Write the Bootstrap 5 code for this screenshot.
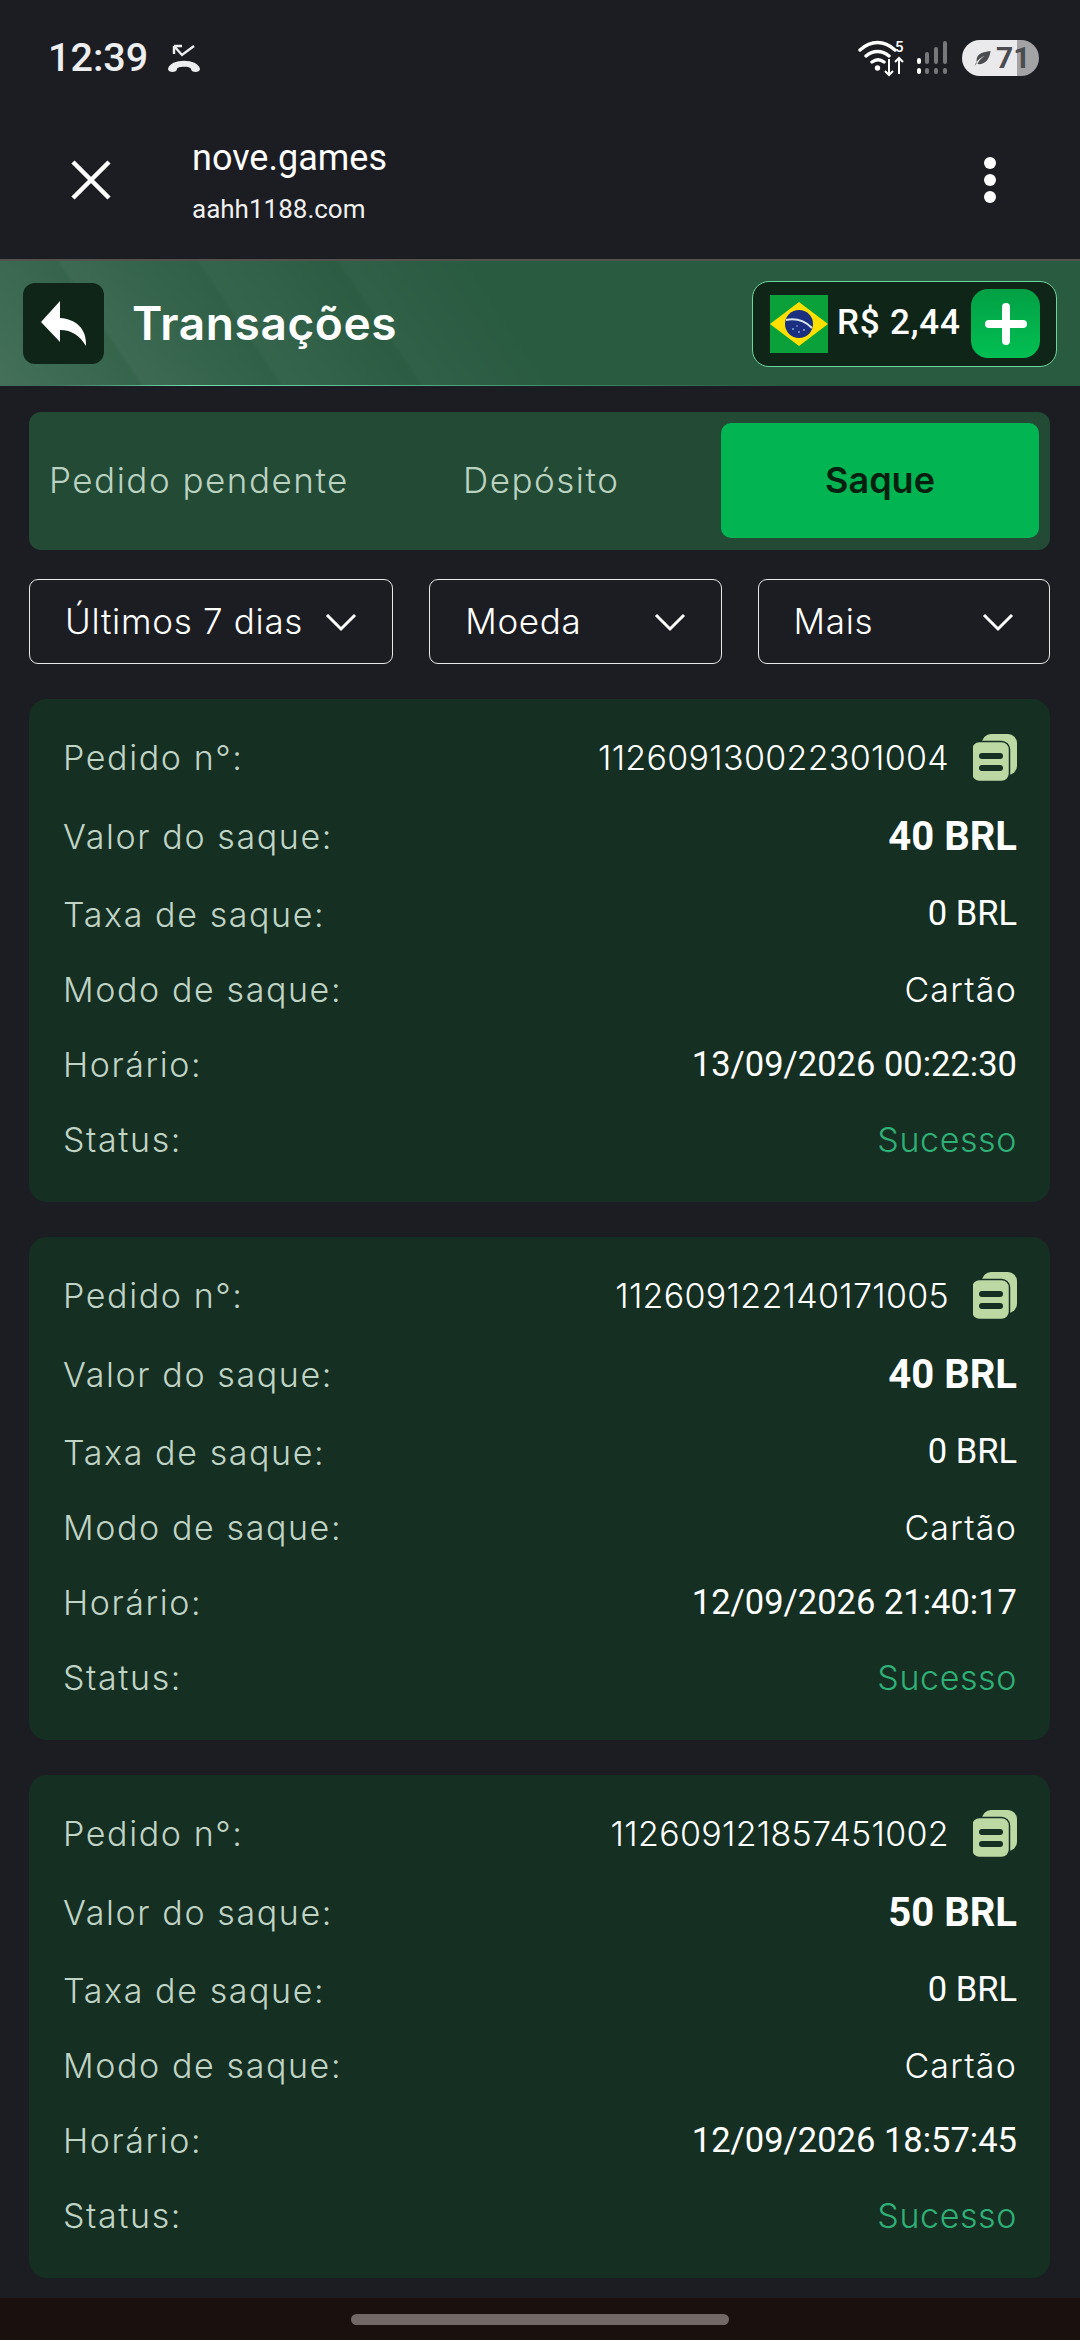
<!DOCTYPE html>
<html lang="pt">
<head>
  <meta charset="UTF-8" />
  <meta name="viewport" content="width=device-width, initial-scale=1.0"/>
  <title>Transações</title>
  <link href="https://cdn.jsdelivr.net/npm/bootstrap@5.3.0/dist/css/bootstrap.min.css" rel="stylesheet"/>
  <style>
    html, body { background: #1c1d22; }
    body { width: 1080px; height: 2340px; overflow: hidden; font-family: Inter, "Liberation Sans", sans-serif; color: #fff; }
    .rb { font-family: Roboto, "Liberation Sans", sans-serif; }

    .status-bar { height: 107px; padding: 39px 41px 0 48px; align-items: flex-start; }
    .status-time { font-size: 39.5px; font-weight: 500; line-height: 38px; color: #eceef0; margin-right: 19px; }
    .batt { width: 77px; height: 36px; border-radius: 18px; background: linear-gradient(90deg, #eaeaec 0 71%, #a3a3a5 71%); color: #4b4c50; font-size: 30px; font-weight: 700; line-height: 36px; gap: 4px; padding-left: 11px; margin-left: 14px; }

    .browser-bar { height: 152px; padding: 0 84px 6px 71px; }
    .browser-title { font-size: 36px; line-height: 40px; }
    .browser-url { font-size: 26px; line-height: 34px; margin-top: 14px; color: #f0f0f0; }
    .browser-text { margin-left: 81px; padding-top: 4px; }
    .dot-col { gap: 5px; }
    .dot-col i { display: block; width: 12px; height: 12px; border-radius: 50%; background: #fff; }

    .top-head { height: 127px; padding: 0 23px; border-top: 2px solid #54524e;
      background:
        linear-gradient(90deg, transparent 4%, #74dfae 18%, #3f8f68 50%, transparent 72%) left bottom / 100% 1px no-repeat,
        linear-gradient(56deg, rgba(255,255,255,.13) 0, rgba(255,255,255,.06) 12%, rgba(255,255,255,.09) 12.5%, rgba(255,255,255,.03) 24%, rgba(255,255,255,.06) 24.5%, rgba(255,255,255,.01) 36%, rgba(255,255,255,.035) 36.5%, transparent 48%),
        #295b41; }
    .back-btn { width: 81px; height: 81px; background: #0e2518; border-radius: 12px; }
    .page-title { font-size: 46px; font-weight: 600; margin: 0 0 0 28px; letter-spacing: .6px; }
    .bal-box { width: 305px; height: 86px; padding: 0 16px 0 17px; background: #0e2518; border: 1.5px solid #6fd69b; border-radius: 17px; }
    .bal-text { font-size: 35px; font-weight: 500; margin: 0 auto 0 9px; letter-spacing: .8px; white-space: nowrap; }
    .plus-btn { width: 69px; height: 69px; border-radius: 17px; background: linear-gradient(180deg, #02a044, #02bf52); border: 0; }

    .page-body { padding: 26px 30px 0 29px; }
    .tab-strip { height: 138px; background: #224a35; border-radius: 12px; padding: 11px 11px 12px 0; }
    .tab-item { font-size: 35px; font-weight: 300; color: #bcd2c1; line-height: 115px; white-space: nowrap; letter-spacing: 1.5px; }
    .tab-item.first { width: 434px; padding-left: 20px; }
    .tab-item.second { width: 256px; }
    .tab-item.on { width: 318px; background: #03b452; color: #06200f; font-weight: 600; font-size: 36px; letter-spacing: 0; border-radius: 10px; text-align: center; margin-left: auto; }

    .filter-row { margin-top: 29px; gap: 36px; }
    .filter-btn { height: 85px; border: 1.5px solid #e8e8e8; border-radius: 9px; background: transparent; color: #fff; font-size: 35px; font-weight: 300; letter-spacing: .7px; padding: 0 35px; justify-content: space-between; white-space: nowrap; }
    .f1 { width: 365px; }
    .f2, .f3 { width: 293px; }

    .tx-card { height: 503px; background: #152f22; border-radius: 18px; padding: 19px 33px 0 34px; margin-top: 35px; border: 0; }
    .tx-row { height: 75px; font-size: 34px; }
    .tx-row.big { height: 79px; }
    .tx-row.mid { height: 76px; }
    .tx-label { color: #c0d4c6; font-weight: 300; letter-spacing: 1.6px; white-space: nowrap; }
    .tx-val { font-family: Roboto, "Liberation Sans", sans-serif; color: #fff; font-size: 34.5px; white-space: nowrap; }
    .tx-val.strong { font-size: 40px; font-weight: 700; }
    .tx-val.inter { font-family: Inter, "Liberation Sans", sans-serif; font-weight: 300; font-size: 34px; letter-spacing: .3px; }
    .tx-val.wide { letter-spacing: 1.2px; }
    .tx-val.ok { font-family: Inter, "Liberation Sans", sans-serif; font-weight: 300; font-size: 34px; color: #2fb077; letter-spacing: .6px; }
    .copy-ico { margin-left: 24px; flex: none; }

    .nav-strip { position: fixed; left: 0; right: 0; bottom: 0; height: 42px; background: #1a110f; }
    .nav-pill { width: 378px; height: 11px; background: #726865; border-radius: 6px; margin: 16px auto 0; }
  </style>
</head>
<body>
  <div class="status-bar d-flex">
    <span class="status-time rb">12:39</span>
    <svg width="34" height="32" viewBox="0 0 34 32" class="mt-1" fill="none">
      <path d="M7 3l8 9 12-9M7 3v8M7 3h8" stroke="#eceef0" stroke-width="2.400"/>
      <path d="M1 26c2-11 30-11 32 0 0 4-9 4-9 0 0-3-14-3-14 0 0 4-9 4-9 0z" fill="#eceef0"/>
    </svg>
    <div class="ms-auto d-flex align-items-center">
      <svg width="50" height="38" viewBox="0 0 50 38" fill="none" class="me-2">
        <path d="M2 11c11-10 24-10 35 0M8 17c7-6 16-6 23 0M14 23c4-3 8-3 12 0" stroke="#fff" stroke-width="3.400" stroke-linecap="round"/>
        <circle cx="19.500" cy="29" r="2.700" fill="#fff"/>
        <path d="M31 20v16M27 32l4 4 4-4M41 35V19M37 23l4-4 4 4" stroke="#fff" stroke-width="2"/>
        <text x="37" y="13" font-family="Roboto" font-size="15" font-weight="500" fill="#fff">5</text>
      </svg>
      <svg width="32" height="34" viewBox="0 0 32 34">
        <rect x="1" y="17" width="4" height="6" rx="2" fill="#fff"/><rect x="1" y="27" width="4" height="6" rx="2" fill="#fff"/>
        <rect x="9" y="11" width="4" height="12" rx="2" fill="#77787a"/><rect x="9" y="27" width="4" height="6" rx="2" fill="#77787a"/>
        <rect x="18" y="6" width="4" height="17" rx="2" fill="#77787a"/><rect x="18" y="27" width="4" height="6" rx="2" fill="#77787a"/>
        <rect x="27" y="0" width="4" height="23" rx="2" fill="#77787a"/><rect x="27" y="27" width="4" height="6" rx="2" fill="#77787a"/>
      </svg>
      <div class="batt d-flex align-items-center rb">
        <svg width="19" height="18" viewBox="0 0 18 18"><path d="M1 17c2-5 5-8 10-10-4 3-6 5-7 8 6 1 12-3 13-13C12 3 3 3 3 12c0 1 0 2 .3 2z" fill="#4b4c50"/></svg>
        <span>71</span>
      </div>
    </div>
  </div>

  <div class="browser-bar d-flex align-items-center">
    <svg width="40" height="40" viewBox="0 0 40 40"><path d="M2 2l36 36M38 2L2 38" stroke="#fff" stroke-width="4.500"/></svg>
    <div class="browser-text rb">
      <div class="browser-title">nove.games</div>
      <div class="browser-url">aahh1188.com</div>
    </div>
    <div class="dot-col d-flex flex-column ms-auto"><i></i><i></i><i></i></div>
  </div>

  <div class="top-head d-flex align-items-center">
    <button class="back-btn btn p-0 d-flex align-items-center justify-content-center" type="button" aria-label="Voltar">
      <svg width="46" height="46" viewBox="0 0 46 46"><path d="M0 21L19 0v17c16 1 27 11 26 28-6-10-14-16-26-16v12z" fill="#fff"/></svg>
    </button>
    <h1 class="page-title">Transações</h1>
    <div class="bal-box d-flex align-items-center ms-auto">
      <svg width="58" height="58" viewBox="0 0 58 58" class="flex-shrink-0">
        <rect width="58" height="58" fill="#0aa13a"/>
        <path d="M0 29L29 7l29 22-29 22z" fill="#fedf00"/>
        <circle cx="29" cy="29" r="14" fill="#1b2f80"/>
        <path d="M16 25c10-2 19 1 26 8" stroke="#d8e3ea" stroke-width="2" fill="none"/>
        <g fill="#8fb1e6"><circle cx="23" cy="34" r=".9"/><circle cx="29" cy="37" r=".9"/><circle cx="34" cy="35" r=".9"/><circle cx="27" cy="31" r=".8"/></g>
      </svg>
      <span class="bal-text rb">R$ 2,44</span>
      <button class="plus-btn btn p-0 d-flex align-items-center justify-content-center flex-shrink-0" type="button" aria-label="Depositar">
        <svg width="44" height="44" viewBox="0 0 44 44"><path d="M22 5v34M5 22h34" stroke="#fff" stroke-width="8" stroke-linecap="round"/></svg>
      </button>
    </div>
  </div>

  <div class="page-body">
    <div class="tab-strip d-flex">
      <div class="tab-item first">Pedido pendente</div>
      <div class="tab-item second">Depósito</div>
      <div class="tab-item on">Saque</div>
    </div>

    <div class="filter-row d-flex">
      <button class="filter-btn f1 d-flex align-items-center" type="button">Últimos 7 dias <svg class="flex-shrink-0" width="32" height="20" viewBox="0 0 32 20" fill="none"><path d="M2 3l14 14L30 3" stroke="#fff" stroke-width="3"/></svg></button>
      <button class="filter-btn f2 d-flex align-items-center" type="button">Moeda <svg class="flex-shrink-0" width="32" height="20" viewBox="0 0 32 20" fill="none"><path d="M2 3l14 14L30 3" stroke="#fff" stroke-width="3"/></svg></button>
      <button class="filter-btn f3 d-flex align-items-center" type="button">Mais <svg class="flex-shrink-0" width="32" height="20" viewBox="0 0 32 20" fill="none"><path d="M2 3l14 14L30 3" stroke="#fff" stroke-width="3"/></svg></button>
    </div>

    <div id="txList"></div>
  </div>

  <div class="nav-strip"><div class="nav-pill"></div></div>

  <script>
    const saques = [
      { id: '112609130022301004', valor: '40 BRL', hora: '13/09/2026 00:22:30' },
      { id: '112609122140171005', valor: '40 BRL', hora: '12/09/2026 21:40:17' },
      { id: '112609121857451002', valor: '50 BRL', hora: '12/09/2026 18:57:45' },
    ];

    const copyIcon = `<svg class="copy-ico" width="44" height="47" viewBox="0 0 44 47">
      <rect x="9" y="0" width="35" height="41" rx="9" fill="#bcd9a4"/>
      <rect x="-1.500" y="7.500" width="38" height="40" rx="8" fill="#bcd9a4" stroke="#152f22" stroke-width="1.500"/>
      <rect x="6" y="19" width="24" height="6" rx="3" fill="#152f22"/>
      <rect x="6" y="31" width="24" height="6" rx="3" fill="#152f22"/>
    </svg>`;

    document.getElementById('txList').innerHTML = saques.map(s => `
      <div class="tx-card card">
        <div class="tx-row big d-flex align-items-center justify-content-between">
          <span class="tx-label">Pedido n°:</span>
          <span class="d-flex align-items-center"><span class="tx-val inter">${s.id}</span>${copyIcon}</span>
        </div>
        <div class="tx-row big d-flex align-items-center justify-content-between">
          <span class="tx-label">Valor do saque:</span><span class="tx-val strong">${s.valor}</span>
        </div>
        <div class="tx-row mid d-flex align-items-center justify-content-between">
          <span class="tx-label">Taxa de saque:</span><span class="tx-val">0 BRL</span>
        </div>
        <div class="tx-row d-flex align-items-center justify-content-between">
          <span class="tx-label">Modo de saque:</span><span class="tx-val inter wide">Cartão</span>
        </div>
        <div class="tx-row d-flex align-items-center justify-content-between">
          <span class="tx-label">Horário:</span><span class="tx-val">${s.hora}</span>
        </div>
        <div class="tx-row d-flex align-items-center justify-content-between">
          <span class="tx-label">Status:</span><span class="tx-val ok">Sucesso</span>
        </div>
      </div>`).join('');
  </script>
  <script src="https://cdn.jsdelivr.net/npm/bootstrap@5.3.0/dist/js/bootstrap.bundle.min.js"></script>
</body>
</html>
